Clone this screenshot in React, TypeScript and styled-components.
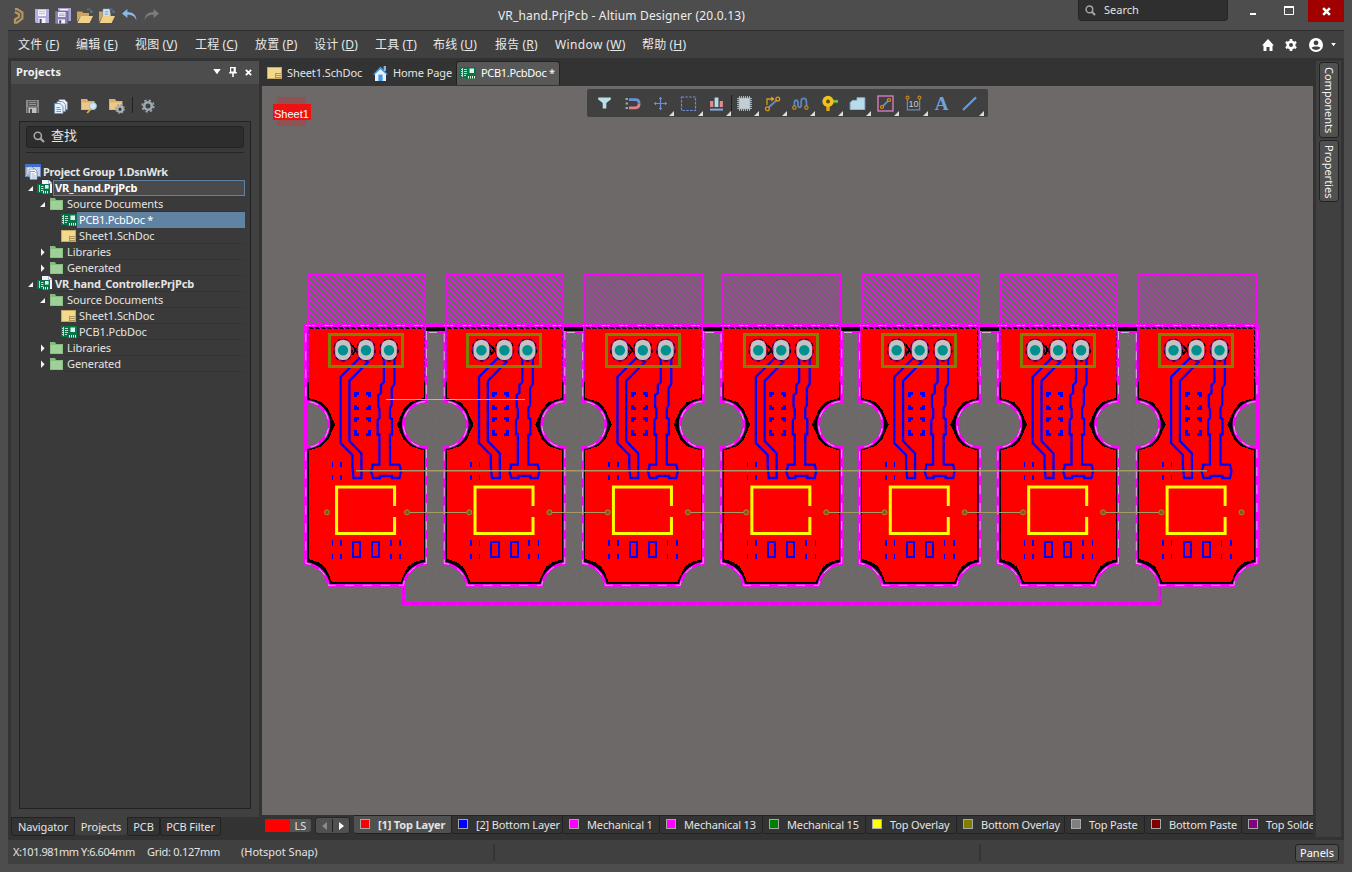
import React from "react";
import styled, { createGlobalStyle, css } from "styled-components";

const GlobalStyle = createGlobalStyle`
  * { box-sizing: border-box; }
  html, body { margin: 0; padding: 0; }
  body {
    background: #4d4d4d;
    color: #e4e4e4;
    font-family: "Noto Sans", "Noto Sans CJK SC", sans-serif;
    font-size: 11px;
    line-height: 16px;
    overflow: hidden;
  }
  svg { display: block; flex: none; overflow: visible; }
`;

/* ---------- window frame ---------- */

const Window = styled.div`
  width: 1352px;
  height: 872px;
  padding: 0 8px 8px;
  display: flex;
  flex-direction: column;
  background: #4d4d4d;
`;

const TitleBar = styled.header`
  flex: none;
  height: 31px;
  border-bottom: 1px solid #2c2c2c;
  display: grid;
  grid-template-columns: 490px 580px 1fr;
`;

const QuickAccess = styled.div`
  display: flex;
  align-items: center;
  padding-left: 3px;
  gap: 6px;
`;

const Title = styled.div`
  font-size: 12px;
  line-height: 31px;
  letter-spacing: 0.17px;
  white-space: nowrap;
  color: #ececec;
`;

const WindowTools = styled.div`
  display: flex;
  align-items: flex-start;
`;

const TitleSearch = styled.div`
  width: 150px;
  height: 21px;
  margin-right: 7px;
  border-radius: 0 0 4px 4px;
  border: 1px solid #262626;
  border-top: 0;
  background: #2f2f2f;
  display: flex;
  align-items: center;
  gap: 8px;
  padding-left: 6px;
`;

const WindowButton = styled.div<{ $close?: boolean }>`
  width: 36px;
  height: 22px;
  flex: none;
  margin-left: ${(p) => (p.$close ? 1 : 0)}px;
  display: flex;
  align-items: center;
  justify-content: center;
  background: ${(p) => (p.$close ? "#a10000" : "transparent")};
`;

const MenuBar = styled.nav`
  flex: none;
  height: 27px;
  background: #404040;
  display: flex;
  align-items: center;
  padding-left: 10px;
  font-size: 12px;
`;

const MenuItem = styled.span<{ $width: number }>`
  width: ${(p) => p.$width}px;
  letter-spacing: ${(p) => (p.$width > 80 ? 0.38 : 0.15)}px;
  white-space: nowrap;
  color: #e8e8e8;
`;

const MenuRight = styled.div`
  margin-left: auto;
  display: flex;
  align-items: center;
  padding-right: 8px;
`;

const Main = styled.div`
  flex: 1;
  min-height: 0;
  background: #333333;
  display: flex;
  padding: 3px 3px 0;
`;

/* ---------- projects panel ---------- */

const Side = styled.aside`
  width: 248px;
  display: flex;
  flex-direction: column;
`;

const PanelHeader = styled.div`
  height: 23px;
  background: #4d4d4d;
  display: flex;
  align-items: center;
  padding: 0 7px 1px 5px;
  font-weight: 700;
  letter-spacing: 0.1px;
  color: #f2f2f2;
`;

const HeaderActions = styled.div`
  margin-left: auto;
  display: flex;
  align-items: center;
  gap: 8px;
`;

const PanelBody = styled.div`
  height: 733px;
  background: #404040;
  padding: 11px 8px 8px;
  display: flex;
  flex-direction: column;
`;

const PanelToolbar = styled.div`
  height: 26px;
  flex: none;
  display: flex;
  align-items: flex-start;
  padding: 2px 0 0 7px;
`;

const ToolSlot = styled.div<{ $width: number }>`
  width: ${(p) => p.$width}px;
  height: 18px;
  display: flex;
  align-items: center;
`;

const ToolDivider = styled.div`
  width: 1px;
  height: 16px;
  margin-right: 8px;
  background: #222;
`;

const TreeBox = styled.div`
  flex: 1;
  border: 1px solid #222222;
  background: #3a3a3a;
`;

const PanelSearch = styled.div`
  margin: 4px 6px 0;
  height: 22px;
  border: 1px solid #242424;
  border-radius: 3px;
  background: #2d2d2d;
  display: flex;
  align-items: center;
  gap: 6px;
  padding: 0 6px;
  font-size: 13px;
`;

const SearchHint = styled.span`
  padding-bottom: 5px;
`;

const Rule = styled.div`
  margin: 4px 6px 11px;
  height: 1px;
  background: #262626;
`;

const TreeRow = styled.div<{ $depth: number }>`
  height: 16px;
  display: flex;
  align-items: stretch;
  padding-right: 5px;
  padding-left: ${(p) => (p.$depth === 0 ? 5 : p.$depth * 12 - 5)}px;
`;

const ArrowCell = styled.div`
  width: 10px;
  display: flex;
  align-items: center;
`;

const IconCell = styled.div<{ $inset: boolean }>`
  width: 16px;
  padding-left: ${(p) => (p.$inset ? 1 : 0)}px;
  display: flex;
  align-items: center;
`;

const TreeLabel = styled.div<{ $bold?: boolean; $mark?: "focus" | "selected"; $tight?: boolean }>`
  flex: 1;
  padding-left: 2px;
  line-height: 16px;
  white-space: nowrap;
  font-weight: ${(p) => (p.$bold ? 700 : 400)};
  letter-spacing: ${(p) => (p.$tight ? -0.25 : p.$bold ? -0.14 : -0.08)}px;
  border-bottom: 1px solid #343434;
  ${(p) =>
    p.$mark === "focus" &&
    css`
      background: #4b4949;
      border: 1px solid #5f83a5;
      padding-left: 1px;
      line-height: 14px;
      color: #fff;
    `}
  ${(p) =>
    p.$mark === "selected" &&
    css`
      background: #6083a4;
      border-color: #6083a4;
      letter-spacing: -0.27px;
      color: #fff;
    `}
`;

const PanelTabs = styled.div`
  display: flex;
  height: 20px;
`;

const PanelTab = styled.div<{ $width: number; $active?: boolean }>`
  width: ${(p) => p.$width}px;
  height: ${(p) => (p.$active ? 18 : 19)}px;
  line-height: ${(p) => (p.$active ? 19 : 17)}px;
  letter-spacing: -0.1px;
  text-align: center;
  white-space: nowrap;
  border: 1px solid ${(p) => (p.$active ? "#404040" : "#222")};
  border-top-width: ${(p) => (p.$active ? 0 : 1)}px;
  border-radius: 0 0 3px 3px;
  background: ${(p) => (p.$active ? "#404040" : "#333")};
`;

/* ---------- documents ---------- */

const Workspace = styled.main`
  width: 1051px;
  margin-left: 3px;
  display: flex;
  flex-direction: column;
`;

const DocTabs = styled.div`
  height: 25px;
  flex: none;
  display: flex;
  padding-left: 1px;
`;

const DocTab = styled.div<{ $width: number; $active?: boolean }>`
  width: ${(p) => p.$width}px;
  height: 24px;
  display: flex;
  align-items: center;
  gap: 5px;
  padding-left: 4px;
  letter-spacing: -0.1px;
  white-space: nowrap;
  ${(p) =>
    p.$active &&
    css`
      background: #585858;
      border: 1px solid #222;
      border-bottom: 0;
      border-radius: 3px 3px 0 0;
      padding: 0 0 2px 3px;
      letter-spacing: -0.3px;
      color: #fff;
    `}
`;

const Canvas = styled.section`
  position: relative;
  height: 729px;
  flex: none;
  background: #6d6968;
  overflow: hidden;
`;

const SheetTag = styled.div`
  position: absolute;
  left: 15px;
  top: 11px;
  width: 29px;
  height: 29px;
  border: 1px solid #e010d0;
  background: #915253;
`;

const SheetTagText = styled.div`
  position: absolute;
  left: 11px;
  top: 18px;
  width: 38px;
  height: 16px;
  padding-left: 1px;
  background: #ee1111;
  color: #fff;
  font: 11px/20px "Liberation Sans", sans-serif;
`;

const ActiveBar = styled.div`
  position: absolute;
  left: 325px;
  top: 3px;
  width: 401px;
  height: 28px;
  border-radius: 2px;
  background: #404040;
  display: grid;
  grid-template-columns: repeat(14, 28.14px);
  padding-left: 3px;
`;

const BarCell = styled.div<{ $divided?: boolean }>`
  position: relative;
  display: flex;
  align-items: center;
  justify-content: center;
  ${(p) =>
    p.$divided &&
    css`
      &::before {
        content: "";
        position: absolute;
        left: 0;
        top: 6px;
        height: 16px;
        border-left: 1px solid #1f1f1f;
      }
    `}
`;

const Corner = styled.i`
  position: absolute;
  right: 0;
  bottom: 1px;
  border-left: 5px solid transparent;
  border-bottom: 5px solid #dcdcdc;
`;

const LayerBar = styled.div`
  height: 22px;
  display: flex;
  overflow: hidden;
  padding-left: 3px;
`;

const CurrentLayer = styled.div`
  width: 25px;
  height: 13px;
  flex: none;
  margin-top: 4px;
  background: #f00;
`;

const LayerSet = styled.div`
  width: 21px;
  height: 13px;
  flex: none;
  margin: 4px 4px 0 0;
  line-height: 13px;
  text-align: center;
  background: #555;
  border-radius: 0 3px 3px 0;
`;

const LayerNav = styled.div`
  width: 35px;
  height: 17px;
  flex: none;
  margin: 2px 4px 0 0;
  border: 1px solid #282828;
  border-radius: 3px;
  background: #505050;
  display: grid;
  grid-template-columns: 1fr 1px 1fr;
  align-items: center;
  justify-items: center;
`;

const NavLine = styled.span`
  width: 1px;
  height: 13px;
  background: #222;
`;

const LayerTab = styled.div<{ $width: number; $active?: boolean }>`
  width: ${(p) => p.$width}px;
  height: 19px;
  flex: none;
  display: flex;
  align-items: center;
  gap: 8px;
  padding-left: 6px;
  padding-top: 1px;
  letter-spacing: -0.15px;
  white-space: nowrap;
  border: 1px solid #222;
  border-left-width: 0;
  border-radius: 0 0 3px 3px;
  background: ${(p) => (p.$active ? "#505050" : "#333")};
  font-weight: ${(p) => (p.$active ? 700 : 400)};
`;

const Swatch = styled.span<{ $color: string }>`
  width: 10px;
  height: 10px;
  flex: none;
  border: 1px solid #a8a8a8;
  background: ${(p) => p.$color};
  margin-bottom: 3px;
`;

/* ---------- right dock and status bar ---------- */

const Dock = styled.aside`
  width: 25px;
  height: 776px;
  margin-left: 3px;
  background: #404040;
  padding: 1px 3px 0;
  display: flex;
  flex-direction: column;
  gap: 2px;
`;

const DockTab = styled.div<{ $height: number }>`
  width: 20px;
  height: ${(p) => p.$height}px;
  border: 1px solid #222;
  border-radius: 3px;
  background: #505050;
  writing-mode: vertical-rl;
  line-height: 18px;
  padding-top: 4px;
  color: #f4f4f4;
`;

const StatusBar = styled.footer`
  flex: none;
  height: 24px;
  background: #404040;
  display: flex;
  align-items: center;
  padding: 0 5px;
`;

const StatusText = styled.span<{ $width: number; $tracking?: number }>`
  width: ${(p) => p.$width}px;
  letter-spacing: ${(p) => p.$tracking ?? 0}px;
  white-space: nowrap;
`;

const StatusDivider = styled.span<{ $gap: number }>`
  width: 2px;
  height: 17px;
  margin-right: ${(p) => p.$gap}px;
  background: #353535;
`;

const PanelsButton = styled.div`
  width: 44px;
  height: 18px;
  margin-top: 1px;
  border: 1px solid #222;
  border-radius: 3px;
  background: #505050;
  text-align: center;
  line-height: 16px;
  color: #fff;
`;

/* ---------- icons ---------- */

const Magnifier = ({ size = 12 }: { size?: number }) => (
  <svg width={size} height={size} viewBox="0 0 12 12" fill="none" stroke="#a6a6a6">
    <circle cx="4.8" cy="4.8" r="3.6" strokeWidth="1.6" />
    <path d="M7.6 7.6 11 11" strokeWidth="2.2" />
  </svg>
);

const Logo = () => (
  <svg width="12" height="16" viewBox="0 0 12 16" fill="none" stroke="#b6965a" strokeWidth="2.2">
    <path d="M4 1.2H6.2L11.4 4.6V10.4L6 14.6H4V11.4L8 8.8V6.2L4 4" />
  </svg>
);

const Floppy = () => (
  <svg width="14" height="14" viewBox="0 0 14 14">
    <path d="M0 0H14V14H1L0 13Z" fill="#b2addf" />
    <rect x="3" y="0.8" width="8" height="6.2" fill="#f2f1fa" />
    <path d="M4 2.6H10M4 4.6H10" stroke="#b2addf" strokeWidth="0.8" />
    <rect x="3.5" y="9" width="7" height="5" fill="#f2f1fa" />
    <rect x="4.6" y="10" width="2" height="4" fill="#4a4a55" />
  </svg>
);

const PanelFloppy = () => (
  <svg width="13" height="13" viewBox="0 0 13 13">
    <path d="M0 0H13V13H0Z" fill="#8a8a8a" />
    <rect x="2" y="1" width="9" height="5.4" fill="#585858" />
    <path d="M3 2.5H10M3 4.5H10" stroke="#9a9a9a" strokeWidth=".9" />
    <rect x="3" y="8" width="7" height="5" fill="#c0c0c0" />
    <rect x="4" y="9" width="2" height="4" fill="#4d4d4d" />
    <path d="M1.5 7V13M11.5 7V13" stroke="#5c5c5c" strokeWidth=".8" />
  </svg>
);

const SaveAll = () => (
  <svg width="16" height="16" viewBox="0 0 16 16">
    <path d="M3 0H16V13H3Z" fill="#a9a4d4" />
    <path d="M5 1H13V4H5Z" fill="#f2f1fa" />
    <path d="M0 3H13V16H0Z" fill="#8580b8" stroke="#4d4d4d" strokeWidth=".6" />
    <rect x="3" y="4" width="7.4" height="5" fill="#f5f4fc" />
    <path d="M4 6H9.5M4 7.6H9.5" stroke="#9a95c8" strokeWidth=".8" />
    <rect x="3" y="11.4" width="7" height="4" fill="#f0f0f8" />
    <rect x="4.2" y="12.2" width="2" height="3.4" fill="#50506a" />
  </svg>
);

const OpenFolder = ({ doc = false }: { doc?: boolean }) => (
  <svg width="16" height="16" viewBox="0 0 16 16">
    <path d="M0 14V3.5H5L6.4 5H12V8H4Z" fill="#cda45b" />
    {doc && (
      <>
        <path d="M4 1H11V10H4Z" fill="#f7fbff" stroke="#6d92b5" strokeWidth=".7" />
        <path d="M5.4 3.2H9.6M5.4 5H9.6M5.4 6.8H9.6" stroke="#5b8fc0" strokeWidth=".9" />
      </>
    )}
    <path d="M0.5 15 3.8 8H16L12.6 15Z" fill="#f1d18a" />
    <path d="M10 1.5C12.6.4 14.4 1.6 14.6 4M12.8 3.2 14.6 5 16 3.2" fill="none" stroke="#4f86a8" strokeWidth="1" />
  </svg>
);

const Undo = ({ redo = false }: { redo?: boolean }) => (
  <svg width="16" height="14" viewBox="0 0 16 14">
    <path
      transform={redo ? "translate(16 -1) scale(-1 1)" : "translate(1 -1)"}
      d="M0 5.6 5.4 1V3.9C11 3.9 14.4 6.8 14.4 12.4C12.8 8.4 10 6.8 5.4 6.8V10Z"
      fill={redo ? "#7b7b7b" : "#8db6e6"}
    />
  </svg>
);

const SchIcon = () => (
  <svg width="15" height="12" viewBox="0 0 15 12">
    <rect x=".5" y=".5" width="14" height="11" fill="#f3d98d" stroke="#c9a95f" />
    <path d="M8.5 6.5H14M8.5 8.5H14M8.5 10.5H14M8.5 6V11" stroke="#a88c4c" strokeWidth=".9" />
  </svg>
);

const PcbIcon = () => (
  <svg width="16" height="12" viewBox="0 0 16 12">
    <path d="M0 0H16V12H6V11H0Z" fill="#04764a" />
    <path d="M2.5 1V10M1 2.5H2M1 4.5H2M1 6.5H2M1 8.5H2M4 2.5H7M4 4.5H7M4 6.5H7M4 8.5H6" stroke="#cfe9dc" strokeWidth=".9" />
    <rect x="9.5" y="1.5" width="4.5" height="4.5" fill="#e3f1ea" />
    <path d="M8.5 9V11.5M10.5 9V11.5M12.5 9V11.5M14.5 9V11.5" stroke="#e9f4d6" strokeWidth="1" />
  </svg>
);

const PrjIcon = () => (
  <svg width="16" height="16" viewBox="0 0 16 16">
    <path d="M5 0H12L15 3V13H5Z" fill="#f2f2fb" />
    <path d="M11.5 0V3.5H15" fill="none" stroke="#a5a5c8" strokeWidth=".8" />
    <path d="M0 4H13V14H5V13H0Z" fill="#04764a" />
    <path d="M2.5 5V12M4 6.5H6.4M4 8.5H6.4M4 10.5H6.4" stroke="#cfe9dc" strokeWidth=".9" />
    <rect x="8" y="5" width="3.6" height="3.6" fill="#e3f1ea" />
    <path d="M6.5 11V13.4M8.5 11V13.4M10.5 11V13.4" stroke="#e9f4d6" />
  </svg>
);

const GroupIcon = () => (
  <svg width="16" height="16" viewBox="0 0 16 16">
    <rect x="0.5" y="0.5" width="15" height="12" fill="#c5cfe6" stroke="#6f86c0" />
    <rect x="0" y="0" width="16" height="3" fill="#3e6fd0" />
    <path d="M2 3H7L9 5V11H2Z" fill="#f4f8ff" stroke="#7288ad" strokeWidth=".8" />
    <path d="M4 5H10L12 7V13H4Z" fill="#f4f8ff" stroke="#7288ad" strokeWidth=".8" />
    <path d="M5 7.5H10L12 9.5V15.5H5Z" fill="#f8fbff" stroke="#7288ad" strokeWidth=".8" />
    <path d="M6.5 10H9.5M6.5 12H10.8M6.5 14H10.8" stroke="#7a93ba" strokeWidth=".7" />
  </svg>
);

const FolderIcon = () => (
  <svg width="14" height="12" viewBox="0 0 14 12">
    <path d="M0 0H5L6 2H13V12H0Z" fill="#86bb80" />
    <path d="M.8 3H12.2V11.2H.8Z" fill="#a0d09a" />
  </svg>
);

const Arrow = ({ open }: { open?: boolean }) => (
  <svg width="8" height="8" viewBox="0 0 8 8">
    {open ? <path d="M6 2V7H1Z" fill="#f4f4f4" /> : <path d="M2 0.4V8L5.6 4.2Z" fill="#f4f4f4" />}
  </svg>
);

const CopyDocs = () => (
  <svg width="14" height="15" viewBox="0 0 14 15" fill="#e8f2fc" stroke="#5d93c6" strokeWidth=".9">
    <path d="M5 .5H10.5L13.4 3.4V10.5H5Z" />
    <path d="M3 2.5H8.5L11.4 5.4V12.5H3Z" />
    <path d="M.6 4.5H6L9 7.4V14.5H.6Z" />
    <path d="M2.4 8.5H6M2.4 10.5H7M2.4 12.5H7" />
  </svg>
);

const FolderTool = ({ gear = false }: { gear?: boolean }) => (
  <svg width="17" height="16" viewBox="0 0 17 16">
    <path d="M0 1H6L7.4 3H13.5V12H0Z" fill="#d9b069" />
    <path d="M1 4.4H13V11.4H1Z" fill="#ecc987" />
    {gear ? (
      <>
        <circle cx="11" cy="11" r="2.9" fill="none" stroke="#a4b4bb" strokeWidth="2.2" />
        <circle cx="11" cy="11" r="4.4" fill="none" stroke="#8797a0" strokeWidth="1.2" strokeDasharray="1.7 1.76" />
        <circle cx="11" cy="11" r="1.6" fill="#3a3a3a" />
      </>
    ) : (
      <>
        <path d="M10 10.6 6.2 15" stroke="#e0a860" strokeWidth="1.8" />
        <circle cx="12" cy="8" r="3.5" fill="#d3e7f6" stroke="#9cb6cb" strokeWidth=".9" />
      </>
    )}
  </svg>
);

const GearIcon = () => (
  <svg width="14" height="14" viewBox="0 0 14 14" fill="none" stroke="#9aa9b2">
    <circle cx="7" cy="7" r="3.8" strokeWidth="2.6" />
    <circle cx="7" cy="7" r="5.8" strokeWidth="1.6" strokeDasharray="2.3 2.255" />
  </svg>
);

const MenuGear = () => (
  <svg width="12" height="12" viewBox="0 0 12 12" fill="none" stroke="#fff">
    <circle cx="6" cy="6" r="3.3" strokeWidth="2.6" />
    <path d="M6 0V2M6 10V12M.8 3 2.5 4M9.5 8 11.2 9M.8 9 2.5 8M9.5 4 11.2 3" strokeWidth="2.6" />
  </svg>
);

const MenuHome = () => (
  <svg width="12" height="12" viewBox="0 0 12 12">
    <path d="M6 0 12 6.5H10.5V12H7.5V8H4.5V12H1.5V6.5H0Z" fill="#fff" />
  </svg>
);

const UserIcon = () => (
  <svg width="14" height="14" viewBox="0 0 14 14">
    <circle cx="7" cy="7" r="7" fill="#fff" />
    <circle cx="7" cy="4.8" r="2.4" fill="#404040" />
    <path d="M2.6 9.8C4 7.9 10 7.9 11.4 9.8C9.8 12.6 4.2 12.6 2.6 9.8Z" fill="#404040" />
  </svg>
);

const CaretDown = ({ w = 8 }: { w?: number }) => (
  <svg width={w} height={w * 0.7} viewBox="0 0 8 6">
    <path d="M0 0H8L4 5.6Z" fill="#fff" />
  </svg>
);

const PinIcon = () => (
  <svg width="8" height="10" viewBox="0 0 8 10">
    <path d="M1.6.6H6.2V5.2H1.6Z" fill="none" stroke="#fff" strokeWidth="1.2" />
    <path d="M5.4 0V5.5M.2 5.7H7.8M4 6V10" stroke="#fff" strokeWidth="1.5" />
  </svg>
);

const Cross = ({ size = 7 }: { size?: number }) => (
  <svg width={size} height={size} viewBox="0 0 8 8">
    <path d="M1 1 7 7M7 1 1 7" stroke="#fff" strokeWidth="2.2" />
  </svg>
);

const HouseIcon = () => (
  <svg width="15" height="15" viewBox="0 0 15 15">
    <path d="M10.6 0H13V5H10.6Z" fill="#8fb5d8" />
    <path d="M2 7 7.5 2 13 7V15H2Z" fill="#e6f3ff" />
    <path d="M0 8.4 7.5.6 15 8.4 13.8 9 7.5 3.2 1.2 9Z" fill="#3f98ef" />
    <rect x="5.4" y="8.6" width="4.2" height="6.4" fill="#3f98ef" />
  </svg>
);

const barIcons: React.ReactNode[] = [
  <path d="M2.2 2.4H14.8V4.4L10.3 8V13.4H6.7V8L2.2 4.4Z" fill="#b9dfe8" />,
  <>
    <path d="M1.5 4H4M1.5 8.5H4M1.5 13H4" stroke="#8fa9ad" strokeWidth="2.2" />
    <path d="M5 4.6H11.4C14.6 4.6 15.2 6.6 15.2 8.6" fill="none" stroke="#6d90dc" strokeWidth="2.6" />
    <path d="M5 12.8H11.4C14.4 12.8 15.2 10.6 15.2 8.6" fill="none" stroke="#e08287" strokeWidth="2.8" />
  </>,
  <path d="M8.5 2V15M2 8.5H15M7 3.5H10M7 13.5H10M3.5 7V10M13.5 7V10" stroke="#6a8ddb" strokeWidth="1.2" />,
  <rect x="1.5" y="2" width="14" height="13.5" fill="none" stroke="#6a8ddb" strokeWidth="1.2" strokeDasharray="2.6 1.2" />,
  <>
    <path d="M3.7 6V12M13.3 6V12" stroke="#e68a8d" strokeWidth="3.2" />
    <path d="M8.5 2.5V12" stroke="#b3dbe8" strokeWidth="3.8" />
    <path d="M2 14.6H15" stroke="#86a9dc" strokeWidth="2" />
  </>,
  <>
    <path d="M3.5 1V16M5.5 1V16M7.5 1V16M9.5 1V16M11.5 1V16M13.5 1V16M1 3.5H16M1 5.5H16M1 7.5H16M1 9.5H16M1 11.5H16M1 13.5H16" stroke="#9db4bd" strokeWidth="1" />
    <rect x="3.2" y="3.2" width="10.6" height="10.6" fill="#c8cdd4" stroke="#aebfc8" />
  </>,
  <>
    <path d="M3 10V4H9" fill="none" stroke="#d79a1d" strokeWidth="1.3" />
    <path d="M7.2 1.6 10.6 4 7.2 6.4Z" fill="#e0a81f" />
    <path d="M4.6 12.6 12.8 5" stroke="#6b86b8" strokeWidth="2" />
    <circle cx="3.4" cy="13.8" r="1.9" fill="none" stroke="#d79a1d" strokeWidth="1.3" />
    <circle cx="13.8" cy="4" r="1.9" fill="none" stroke="#d79a1d" strokeWidth="1.3" />
  </>,
  <>
    <path d="M2.4 11V8C2.4 4.4 6 4.4 6 7.6V10C6 13 9.2 13 9.2 10V6C9.2 2.4 14.4 2.4 14.4 6.4V11" fill="none" stroke="#5f84c4" strokeWidth="1.8" />
    <circle cx="2.4" cy="12.6" r="1.7" fill="#404040" stroke="#c08a22" strokeWidth="1.2" />
    <circle cx="14.4" cy="12.6" r="1.7" fill="#404040" stroke="#c08a22" strokeWidth="1.2" />
  </>,
  <>
    <path d="M9 6.5H17" stroke="#4a9a3a" strokeWidth="3.4" />
    <path d="M10 6.2H17" stroke="#8bd173" strokeWidth="1.2" />
    <path d="M7 8V16" stroke="#e0a910" strokeWidth="3.4" />
    <circle cx="7" cy="6.4" r="5.6" fill="#f2c318" />
    <circle cx="7" cy="6.4" r="2" fill="#5c4a10" />
  </>,
  <path d="M1.2 14.5V7.6L3.4 5.4H8V2.8H15.8V14.5Z" fill="#b9dde8" stroke="#8db9d4" />,
  <>
    <rect x="1" y="1" width="15" height="15" fill="none" stroke="#ee86d8" strokeWidth="1.2" />
    <path d="M5 12 12 5" stroke="#6b86b8" strokeWidth="1.8" />
    <circle cx="5" cy="12" r="1.5" fill="#404040" stroke="#d79a1d" strokeWidth="1.2" />
    <circle cx="12" cy="5" r="1.5" fill="#404040" stroke="#d79a1d" strokeWidth="1.2" />
  </>,
  <>
    <path d="M2.4 4V14.8H14.6V4" fill="none" stroke="#6b86b8" strokeWidth="1.3" />
    <circle cx="2.6" cy="2.6" r="1.5" fill="none" stroke="#c08a22" strokeWidth="1.1" />
    <circle cx="14.4" cy="2.6" r="1.5" fill="none" stroke="#c08a22" strokeWidth="1.1" />
    <text x="8.5" y="12.4" textAnchor="middle" fontSize="9" fill="#c9c9c9" fontFamily="Liberation Sans Narrow, Liberation Sans">
      10
    </text>
  </>,
  <text x="8.5" y="15" textAnchor="middle" fontSize="19" fontWeight="700" fill="#6ba4e4" fontFamily="Liberation Serif">
    A
  </text>,
  <path d="M2 15 15 2.4" stroke="#5e9ce6" strokeWidth="2.2" />,
];
const withoutCorner = [0, 1, 12];

/* ---------- board drawing ---------- */

const PITCH = 138.42;
const BOARDS = [0, 1, 2, 3, 4, 5, 6];

const outline =
  "M305.8 325.5H426.4V401.5A23 23 0 0 0 426.4 447.5V563.4A26 26 0 0 0 403.4 585.4H328.6A26 26 0 0 0 305.8 563.4V447.5A23 23 0 0 0 305.8 401.5Z";
const copper =
  "M308.6 329H423.8V398L410 402L403.5 409.5L396.8 424.5L403.5 439.5L410 446L423.8 450.5V559.5L414.5 562L408 566.5L404.2 573.5L400.6 582H331.8L328.4 573.5L324.5 566.5L318 562L308.6 559V450.5L322 446L328.4 439.5L335 424.5L328.4 409.5L322 402L308.6 398Z";

/* Diagonal hatching of the 117 x 108 tab above each board. */
const HATCH_STEP = 6;
const hatchLines = Array.from({ length: 38 }, (_, k) => `M${200 + k * HATCH_STEP} 274l109 109`).join("");

/* Brings a board's hatching back onto whole pixels, so every tab has the same weight. */
const snap = (index: number) => Math.round(index * PITCH) - index * PITCH;

const Board = ({ index }: { index: number }) => (
  <g transform={`translate(${index * PITCH} 0)`}>
    <g shapeRendering="auto">
      <path d={outline} fill="#000" stroke="#f0f" strokeWidth="2.8" />
      <path d={outline} fill="none" stroke="#d3b4d3" strokeWidth="1" strokeDasharray="9 9" />
      <g transform={`translate(${snap(index)} 0)`}>
        <path d={hatchLines} stroke="#f0f" strokeWidth="1.05" clipPath="url(#tab)" />
        <path d="M308 382V274.8H425.2V382" fill="none" stroke="#f0f" strokeWidth="1.5" />
      </g>
    </g>
    <path d={copper} fill="#f00" />
    <path d="M352 345 360 355M352 355 360 345" stroke="#000" strokeWidth="2" />
    <g fill="none" stroke="#00f" strokeWidth="2.3" shapeRendering="auto">
      <path d="M359.5 358 340.6 377V443L352.4 455V466L353.5 478H361.4L361.4 453.5 349.4 441V381L369 361" />
      <path d="M383.9 358V382L381 385V393L378.3 395V407L379.5 409V418L377.6 420V434.5H379.4V464.6H372.5V467.5L371 471L373 478H380V476H392V478H399.4L401 471L399.4 464.6H390V434.5H392V419L390 418V408L391.7 405V388L394.4 384V358" />
    </g>
    <path
      fill="#00f"
      d="M354 392h5v3h-2v2h-3zM354 410h5v-3h-2v-2h-3zM354 417h5v3h-2v2h-3zM354 436h5v-3h-2v-3h-3zM371 392h-5v3h2v2h3zM371 410h-5v-3h2v-2h3zM371 417h-5v3h2v2h3zM371 436h-5v-3h2v-3h3z"
    />
    <path
      d="M332.3 462V467M341 462V467M332.3 475V479.5M341 475V479.5M332.3 540V546M341 540V546M332.3 553.5V559M341 553.5V559M390.8 540V546M400.2 540V546M390.8 553.5V559M400.2 553.5V559"
      stroke="#00f"
      strokeWidth="1.6"
    />
    <path d="M353 542.2H360.2V557.2H353ZM372.2 542.2H379.2V557.2H372.2Z" fill="none" stroke="#00f" strokeWidth="2" />
    <rect x="329.2" y="334.6" width="73" height="32" fill="none" stroke="#808000" strokeWidth="3" />
    {[343, 366, 389].map((x) => (
      <g key={x} shapeRendering="auto">
        <ellipse cx={x} cy="350" rx="9.2" ry="11" fill="#f00" stroke="#8b008b" strokeWidth="1.2" />
        <ellipse cx={x} cy="350" rx="9.2" ry="11" fill="none" stroke="#000" strokeWidth="1.2" strokeDasharray="3 4" />
        <rect x={x - 7.8} y="340" width="15.6" height="20" rx="7" fill="#c3c3c3" />
        <circle cx={x} cy="350.2" r="5.2" fill="#009090" />
      </g>
    ))}
    <path d="M394.6 506V487H336.6V533.6H394.6V517" fill="none" stroke="#ff0" strokeWidth="3" shapeRendering="auto" />
  </g>
);

/* The first board's probe points sit 4 units left of the others. */
const probeX = (board: number, x: number) => x + board * PITCH + (board === 0 ? 0 : 4);

const BoardDrawing = () => (
  <svg width="1051" height="729" viewBox="262 86 1051 729" shapeRendering="crispEdges">
    <defs>
      <clipPath id="tab">
        <rect x="308" y="274" width="117" height="108" />
      </clipPath>
      <pattern id="grid" width="8.65" height="8.65" patternUnits="userSpaceOnUse" x="436" y="335">
        <rect width="1" height="1" fill="#7d7978" />
      </pattern>
    </defs>
    <rect x="308" y="334" width="948" height="250" fill="url(#grid)" />
    <path d="M305 325.5H1257" stroke="#f0f" strokeWidth="3" />
    {BOARDS.slice(0, 6).map((i) => (
      <g key={i} transform={`translate(${i * PITCH} 0)`}>
        <path d="M426 332.4H445" stroke="#f0f" strokeWidth="2" />
        <path d="M428.5 332.8H437" stroke="#d9b0d9" strokeWidth="1" />
      </g>
    ))}
    <path d="M305.3 325V563M1257.3 325V563" stroke="#f0f" strokeWidth="2.6" />
    <path d="M403.6 586V603.5H1160V586" fill="none" stroke="#f0f" strokeWidth="3" shapeRendering="auto" />
    <path d="M403.6 586V603.5H1160V586" fill="none" stroke="#c814c8" strokeWidth="1" strokeDasharray="9 3" />
    {BOARDS.map((i) => (
      <Board key={i} index={i} />
    ))}
    {BOARDS.slice(0, 6).map((i) => (
      <path key={i} d={`M${426 + i * PITCH} 329h19`} stroke="#000" strokeWidth="4" />
    ))}
    <g stroke="#a39a68" strokeWidth="1" fill="none">
      <path d="M386 399.5H525" stroke="#c3b49a" />
      <path d="M356 470.7H1207" strokeWidth="1.5" shapeRendering="auto" />
      {BOARDS.slice(0, 6).map((i) => (
        <path key={i} d={`M${probeX(i, 407)} 512.5H${probeX(i + 1, 327)}`} />
      ))}
    </g>
    {BOARDS.flatMap((i) =>
      [326.9, 407].map((x) => (
        <circle
          key={`${i}-${x}`}
          cx={probeX(i, x)}
          cy="512.3"
          r="2.5"
          fill="#806000"
          stroke="#9c8a50"
          strokeWidth="1"
          shapeRendering="auto"
        />
      ))
    )}
  </svg>
);

/* ---------- data ---------- */

type Kind = "group" | "project" | "folder" | "pcb" | "sch";
type Node = { label: string; depth: number; kind: Kind; open?: boolean; mark?: "focus" | "selected" };

const tree: Node[] = [
  { label: "Project Group 1.DsnWrk", depth: 0, kind: "group" },
  { label: "VR_hand.PrjPcb", depth: 1, kind: "project", open: true, mark: "focus" },
  { label: "Source Documents", depth: 2, kind: "folder", open: true },
  { label: "PCB1.PcbDoc *", depth: 3, kind: "pcb", mark: "selected" },
  { label: "Sheet1.SchDoc", depth: 3, kind: "sch" },
  { label: "Libraries", depth: 2, kind: "folder", open: false },
  { label: "Generated", depth: 2, kind: "folder", open: false },
  { label: "VR_hand_Controller.PrjPcb", depth: 1, kind: "project", open: true },
  { label: "Source Documents", depth: 2, kind: "folder", open: true },
  { label: "Sheet1.SchDoc", depth: 3, kind: "sch" },
  { label: "PCB1.PcbDoc", depth: 3, kind: "pcb" },
  { label: "Libraries", depth: 2, kind: "folder", open: false },
  { label: "Generated", depth: 2, kind: "folder", open: false },
];

const treeIcons: Record<Kind, React.ReactNode> = {
  group: <GroupIcon />,
  project: <PrjIcon />,
  folder: <FolderIcon />,
  pcb: <PcbIcon />,
  sch: <SchIcon />,
};

const menus: [string, string, number][] = [
  ["文件", "F", 58],
  ["编辑", "E", 59],
  ["视图", "V", 60],
  ["工程", "C", 60],
  ["放置", "P", 59],
  ["设计", "D", 61],
  ["工具", "T", 58],
  ["布线", "U", 62],
  ["报告", "R", 60],
  ["Window", "W", 87],
  ["帮助", "H", 60],
];

const layers: [string, string, number][] = [
  ["[1] Top Layer", "#f00", 98],
  ["[2] Bottom Layer", "#00f", 111],
  ["Mechanical 1", "#f0f", 97],
  ["Mechanical 13", "#f0f", 103],
  ["Mechanical 15", "#008000", 103],
  ["Top Overlay", "#ff0", 91],
  ["Bottom Overlay", "#808000", 108],
  ["Top Paste", "#808080", 80],
  ["Bottom Paste", "#800000", 97],
  ["Top Solder", "#800080", 97],
];

export default function App() {
  return (
    <>
      <GlobalStyle />
      <Window>
        <TitleBar>
          <QuickAccess>
            <Logo />
            <ToolSlot $width={0} />
            <Floppy />
            <SaveAll />
            <OpenFolder />
            <OpenFolder doc />
            <Undo />
            <Undo redo />
          </QuickAccess>
          <Title>VR_hand.PrjPcb - Altium Designer (20.0.13)</Title>
          <WindowTools>
            <TitleSearch>
              <Magnifier size={11} />
              Search
            </TitleSearch>
            <WindowButton>
              <svg width="7" height="12">
                <rect y="8" width="6" height="2" fill="#fff" />
              </svg>
            </WindowButton>
            <WindowButton>
              <svg width="10" height="10">
                <path d="M.5 1.5V8.5H9.5V1.5" fill="none" stroke="#fff" />
                <rect width="10" height="2" fill="#fff" />
              </svg>
            </WindowButton>
            <WindowButton $close>
              <Cross size={9} />
            </WindowButton>
          </WindowTools>
        </TitleBar>

        <MenuBar>
          {menus.map(([name, key, width]) => (
            <MenuItem key={key} $width={width}>
              {name} (<u>{key}</u>)
            </MenuItem>
          ))}
          <MenuRight>
            <ToolSlot $width={23}>
              <MenuHome />
            </ToolSlot>
            <ToolSlot $width={24}>
              <MenuGear />
            </ToolSlot>
            <ToolSlot $width={22}>
              <UserIcon />
            </ToolSlot>
            <CaretDown w={5} />
          </MenuRight>
        </MenuBar>

        <Main>
          <Side>
            <PanelHeader>
              Projects
              <HeaderActions>
                <CaretDown w={8} />
                <PinIcon />
                <Cross size={7} />
              </HeaderActions>
            </PanelHeader>
            <PanelBody>
              <PanelToolbar>
                <ToolSlot $width={28}>
                  <PanelFloppy />
                </ToolSlot>
                <ToolSlot $width={27}>
                  <CopyDocs />
                </ToolSlot>
                <ToolSlot $width={28}>
                  <FolderTool />
                </ToolSlot>
                <ToolSlot $width={23}>
                  <FolderTool gear />
                </ToolSlot>
                <ToolDivider />
                <ToolSlot $width={16}>
                  <GearIcon />
                </ToolSlot>
              </PanelToolbar>
              <TreeBox>
                <PanelSearch>
                  <Magnifier />
                  <SearchHint>查找</SearchHint>
                </PanelSearch>
                <Rule />
                {tree.map((n, i) => (
                  <TreeRow key={i} $depth={n.depth}>
                    {n.depth > 0 && <ArrowCell>{n.open !== undefined && <Arrow open={n.open} />}</ArrowCell>}
                    <IconCell $inset={n.kind === "folder"}>{treeIcons[n.kind]}</IconCell>
                    <TreeLabel $bold={n.depth < 2} $tight={n.depth === 0} $mark={n.mark}>
                      {n.label}
                    </TreeLabel>
                  </TreeRow>
                ))}
              </TreeBox>
            </PanelBody>
            <PanelTabs>
              <PanelTab $width={64}>Navigator</PanelTab>
              <PanelTab $width={52} $active>
                Projects
              </PanelTab>
              <PanelTab $width={33}>PCB</PanelTab>
              <PanelTab $width={61}>PCB Filter</PanelTab>
            </PanelTabs>
          </Side>

          <Workspace>
            <DocTabs>
              <DocTab $width={106}>
                <SchIcon />
                Sheet1.SchDoc
              </DocTab>
              <DocTab $width={87}>
                <HouseIcon />
                Home Page
              </DocTab>
              <DocTab $width={104} $active>
                <PcbIcon />
                PCB1.PcbDoc *
              </DocTab>
            </DocTabs>
            <Canvas>
              <BoardDrawing />
              <SheetTag />
              <SheetTagText>Sheet1</SheetTagText>
              <ActiveBar>
                {barIcons.map((icon, i) => (
                  <BarCell key={i} $divided={i === 5}>
                    <svg width="17" height="17" viewBox="0 0 17 17">
                      {icon}
                    </svg>
                    {!withoutCorner.includes(i) && <Corner />}
                  </BarCell>
                ))}
              </ActiveBar>
            </Canvas>
            <LayerBar>
              <CurrentLayer />
              <LayerSet>LS</LayerSet>
              <LayerNav>
                <svg width="5" height="8">
                  <path d="M5 0V8L0 4Z" fill="#8a8a8a" />
                </svg>
                <NavLine />
                <svg width="5" height="8">
                  <path d="M0 0V8L5 4Z" fill="#fff" />
                </svg>
              </LayerNav>
              {layers.map(([name, color, width], i) => (
                <LayerTab key={name} $width={width} $active={i === 0}>
                  <Swatch $color={color} />
                  {name}
                </LayerTab>
              ))}
            </LayerBar>
          </Workspace>

          <Dock>
            <DockTab $height={76}>Components</DockTab>
            <DockTab $height={62}>Properties</DockTab>
          </Dock>
        </Main>

        <StatusBar>
          <StatusText $width={134} $tracking={-0.46}>
            X:101.981mm Y:6.604mm
          </StatusText>
          <StatusText $width={94} $tracking={-0.28}>
            Grid: 0.127mm
          </StatusText>
          <StatusText $width={252}>(Hotspot Snap)</StatusText>
          <StatusDivider $gap={484} />
          <StatusDivider $gap={314} />
          <PanelsButton>Panels</PanelsButton>
        </StatusBar>
      </Window>
    </>
  );
}
